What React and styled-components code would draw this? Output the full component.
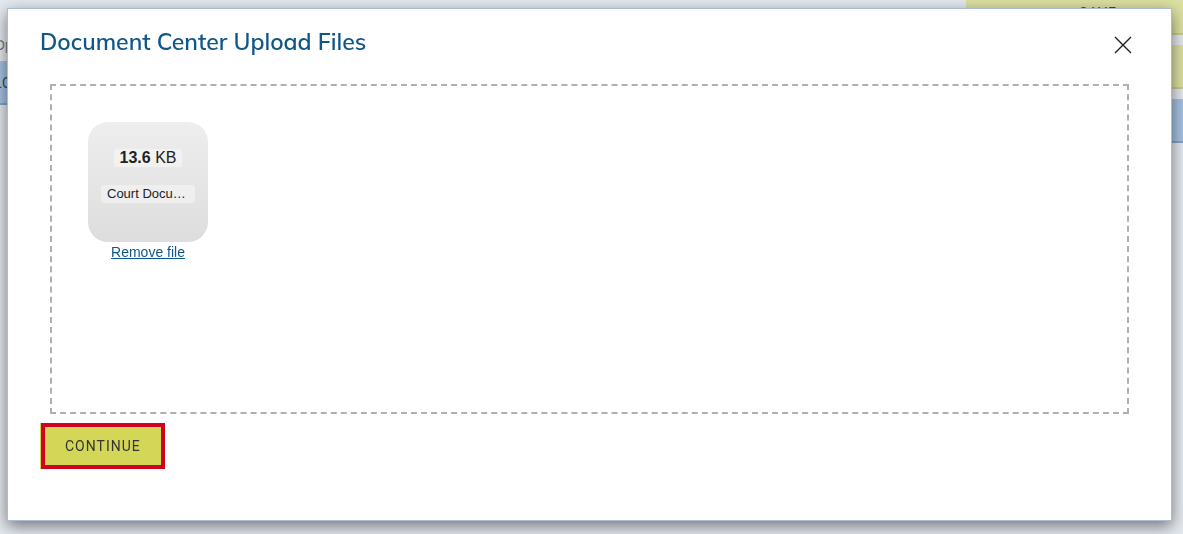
import React, { useState } from "react";
import styled, { createGlobalStyle } from "styled-components";

export default function App() {
  const [files, setFiles] = useState([
    { id: 1, size: "13.6", unit: "KB", name: "Court Document.docx" },
  ]);
  const [open, setOpen] = useState(true);

  const removeFile = (e, id) => {
    e.preventDefault();
    setFiles(files.filter((file) => file.id !== id));
  };

  return (
    <>
      <GlobalStyle />
      <Page>
        <Options>
          <OptionsLabel>Op</OptionsLabel>
          <SideButton $tone="blue" $align="left">LO</SideButton>
        </Options>
        <Actions>
          <SideButton>SAVE</SideButton>
          <SideButton aria-label="Submit" />
          <SideButton $tone="blue" aria-label="Cancel" />
        </Actions>
      </Page>

      {open && (
        <Overlay>
          <Modal role="dialog" aria-labelledby="upload-title">
            <Header>
              <Title id="upload-title">Document Center Upload Files</Title>
              <CloseButton aria-label="Close" onClick={() => setOpen(false)}>
                <svg width="18" height="18" viewBox="0 0 18 18" fill="none">
                  <path d="M1 1L17 17M17 1L1 17" stroke="#222" strokeWidth="1.4" />
                </svg>
              </CloseButton>
            </Header>

            <Dropzone>
              {files.map((file) => (
                <Preview key={file.id}>
                  <Thumb>
                    <FileSize>
                      <strong>{file.size}</strong> {file.unit}
                    </FileSize>
                    <FileName>{file.name}</FileName>
                  </Thumb>
                  <RemoveLink href="#" onClick={(e) => removeFile(e, file.id)}>
                    Remove file
                  </RemoveLink>
                </Preview>
              ))}
            </Dropzone>

            <Footer>
              <ContinueButton>CONTINUE</ContinueButton>
            </Footer>
          </Modal>
        </Overlay>
      )}
    </>
  );
}

const GlobalStyle = createGlobalStyle`
  * {
    box-sizing: border-box;
  }
  body {
    margin: 0;
    background: #e4e9ef;
    color: #222;
    font-family: "Liberation Sans", Arial, sans-serif;
    overflow: hidden;
  }
`;

const Page = styled.main`
  display: flex;
  justify-content: space-between;
  height: 100vh;
  overflow: hidden;
`;

const Options = styled.div`
  width: 120px;
  margin-left: -6px;
  padding-top: 36px;
`;

const OptionsLabel = styled.div`
  height: 25px;
  color: #777;
  font-size: 14px;
  line-height: 18px;
`;

const Actions = styled.div`
  display: flex;
  flex-direction: column;
  gap: 10px;
  width: 264px;
  margin-top: -9px;
  margin-right: -47px;
`;

const SideButton = styled.button`
  width: 100%;
  height: 44px;
  flex-shrink: 0;
  padding: 2px 0 0;
  border: 0;
  border-bottom: 2px solid ${(p) => (p.$tone === "blue" ? "#87a3c4" : "#c8cc90")};
  background: ${(p) => (p.$tone === "blue" ? "#a5c2e2" : "#dce0a0")};
  color: #444;
  font-family: Roboto, sans-serif;
  font-size: 14px;
  letter-spacing: 1px;
  text-align: ${(p) => p.$align || "center"};
`;

const Overlay = styled.div`
  position: fixed;
  inset: 0;
  padding: 8px 11px 13px 7px;
`;

const Modal = styled.section`
  height: 100%;
  padding: 16px 32px;
  border: 1px solid #aabdd1;
  background: #fff;
  box-shadow: 0 5px 15px rgba(0, 0, 0, 0.5);
`;

const Header = styled.header`
  display: flex;
  justify-content: space-between;
  align-items: flex-start;
  height: 59px;
`;

const Title = styled.h2`
  margin: 0;
  color: #0f5787;
  font-family: Mulish, Lato, sans-serif;
  font-size: 23px;
  font-weight: 600;
  line-height: 34px;
`;

const CloseButton = styled.button`
  display: flex;
  padding: 11px 7px;
  border: 0;
  background: none;
  cursor: pointer;
`;

const Dropzone = styled.div`
  height: 330px;
  margin: 0 10px;
  padding: 36px;
  border: 2px dashed #b0b0b0;
`;

const Preview = styled.div`
  display: inline-flex;
  flex-direction: column;
  align-items: center;
  width: 120px;
`;

const Thumb = styled.div`
  display: flex;
  flex-direction: column;
  align-items: center;
  gap: 18px;
  width: 120px;
  height: 120px;
  padding: 27px 13px;
  border-radius: 20px;
  background: linear-gradient(to bottom, #eee, #ddd);
`;

const FileSize = styled.div`
  padding: 0 6px;
  border-radius: 3px;
  background: rgba(255, 255, 255, 0.4);
  font-size: 16px;
  line-height: 18px;
`;

const FileName = styled.div`
  width: 100%;
  padding: 0 6px;
  border-radius: 3px;
  overflow: hidden;
  background: rgba(255, 255, 255, 0.4);
  font-size: 13px;
  line-height: 18px;
  text-overflow: ellipsis;
  white-space: nowrap;
`;

const RemoveLink = styled.a`
  color: #0f5787;
  font-size: 14px;
  line-height: 20px;
`;

const Footer = styled.footer`
  display: flex;
  padding: 9px 1px;
`;

const ContinueButton = styled.button`
  height: 46px;
  padding: 0 20px;
  border: 4px solid #d0021f;
  background: #d4d657;
  box-shadow: -1px 0 #d4d657;
  color: #333;
  font-family: Roboto, sans-serif;
  font-size: 14px;
  letter-spacing: 1px;
  cursor: pointer;
`;
